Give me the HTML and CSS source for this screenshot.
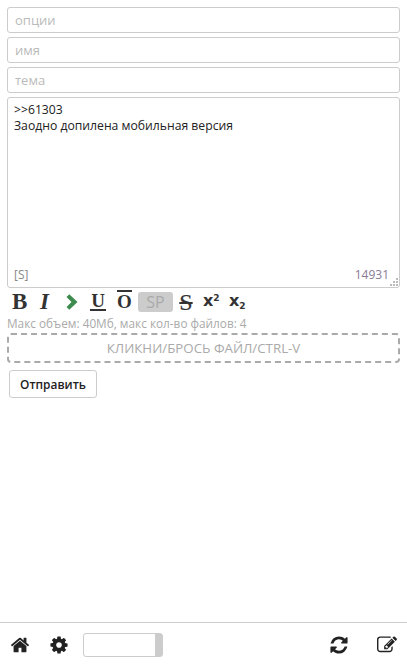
FILE: index.html
```html
<!DOCTYPE html>
<html lang="en">

<head>
    <meta charset="UTF-8">
    <meta name="viewport" content="width=device-width, initial-scale=1.0">
    <title>Ответ</title>
    <link rel="stylesheet" href="styles.css">
</head>

<body>
    <form class="post-form">
        <input class="field" type="text" placeholder="опции">
        <input class="field" type="text" placeholder="имя">
        <input class="field" type="text" placeholder="тема">

        <div class="message-box">
            <textarea class="message">&gt;&gt;61303
Заодно допилена мобильная версия</textarea>
            <span class="sage">[S]</span>
            <span class="counter">14931</span>
            <svg class="grip" viewBox="0 0 8 8">
                <rect x="6" y="0" width="2" height="2"></rect>
                <rect x="3" y="3" width="2" height="2"></rect>
                <rect x="6" y="3" width="2" height="2"></rect>
                <rect x="0" y="6" width="2" height="2"></rect>
                <rect x="3" y="6" width="2" height="2"></rect>
                <rect x="6" y="6" width="2" height="2"></rect>
            </svg>
        </div>

        <div class="markup">
            <b class="mk mk-b">B</b>
            <b class="mk mk-i">I</b>
            <svg class="mk-quote" viewBox="0 0 12 16"><path d="M0.500 3l2.800-2.800 8.200 7.800-8.200 7.800-2.800-2.800 5-5z"></path></svg>
            <b class="mk mk-u">U</b>
            <b class="mk mk-o">O</b>
            <span class="mk-sp">SP</span>
            <b class="mk mk-s">S</b>
            <b class="mk-x">x<span class="sup">2</span></b>
            <b class="mk-x">x<span class="sub">2</span></b>
        </div>

        <div class="limits">Макс объем: 40Мб, макс кол-во файлов: 4</div>
        <div class="dropzone">КЛИКНИ/БРОСЬ ФАЙЛ/CTRL-V</div>
        <button class="submit" type="button">Отправить</button>
    </form>

    <div class="footer">
        <svg class="icon" viewBox="0 0 1792 1792"><path d="M1472 992v480q0 26-19 45t-45 19h-384v-384h-256v384h-384q-26 0-45-19t-19-45v-480q0-1 .5-3t.5-3l575-474 575 474q1 2 1 6zm223-69l-62 74q-8 9-21 11h-3q-13 0-21-7l-692-577-692 577q-12 8-24 7-13-2-21-11l-62-74q-8-10-7-23.500t11-21.500l719-599q32-26 76-26t76 26l244 204v-195q0-14 9-23t23-9h192q14 0 23 9t9 23v408l219 182q10 8 11 21.500t-7 23.500z"></path></svg>
        <svg class="icon icon-cog" viewBox="0 0 1792 1792"><path d="M1152 896q0-106-75-181t-181-75-181 75-75 181 75 181 181 75 181-75 75-181zm512-109v222q0 12-8 23t-20 13l-185 28q-19 54-39 91 35 50 107 138 10 12 10 25t-9 23q-27 37-99 108t-94 71q-12 0-26-9l-138-108q-44 23-91 38-16 136-29 186-7 28-36 28h-222q-14 0-24.500-8.500t-11.500-21.500l-28-184q-49-16-90-37l-141 107q-10 9-25 9-14 0-25-11-126-114-165-168-7-10-7-23 0-12 8-23 15-21 51-66.500t54-70.500q-27-50-41-99l-183-27q-13-2-21-12.500t-8-23.500v-222q0-12 8-23t19-13l186-28q14-46 39-92-40-57-107-138-10-12-10-24 0-10 9-23 26-36 98.500-107.500t94.500-71.500q13 0 26 10l138 107q44-23 91-38 16-136 29-186 7-28 36-28h222q14 0 24.500 8.500t11.500 21.500l28 184q49 16 90 37l142-107q9-9 24-9 13 0 25 10 129 119 165 170 7 8 7 22 0 12-8 23-15 21-51 66.500t-54 70.500q26 50 41 98l183 28q13 2 21 12.500t8 23.500z"></path></svg>
        <div class="slider"><div class="slider-thumb"></div></div>
        <svg class="icon icon-refresh" viewBox="0 0 1792 1792"><path d="M1639 1056q0 5-1 7-64 268-268 434.500t-478 166.500q-146 0-282.500-55t-243.500-157l-129 129q-19 19-45 19t-45-19-19-45v-448q0-26 19-45t45-19h448q26 0 45 19t19 45-19 45l-137 137q71 66 161 102t187 36q134 0 250-65t186-179q11-17 53-117 8-23 30-23h192q13 0 22.500 9.500t9.500 22.500zm25-800v448q0 26-19 45t-45 19h-448q-26 0-45-19t-19-45 19-45l138-138q-148-137-349-137-134 0-250 65t-186 179q-11 17-53 117-8 23-30 23h-199q-13 0-22.500-9.500t-9.500-22.500v-7q65-268 270-434.500t480-166.500q146 0 284 55.500t245 156.500l130-129q19-19 45-19t45 19 19 45z"></path></svg>
        <svg class="icon" viewBox="0 0 1792 1792"><path d="M888 1184l116-116-152-152-116 116v56h96v96h56zm440-720q-16-16-33 1l-350 350q-17 17-1 33t33-1l350-350q17-17 1-33zm80 594v190q0 119-84.500 203.500t-203.500 84.500h-832q-119 0-203.500-84.500t-84.500-203.500v-832q0-119 84.500-203.500t203.500-84.500h832q63 0 117 25 15 7 18 23 3 17-9 29l-49 49q-14 14-32 8-23-6-45-6h-832q-66 0-113 47t-47 113v832q0 66 47 113t113 47h832q66 0 113-47t47-113v-126q0-13 9-22l64-64q15-15 35-7t20 29zm-96-738l288 288-672 672h-288v-288zm444 132l-92 92-288-288 92-92q28-28 68-28t68 28l152 152q28 28 28 68t-28 68z"></path></svg>
    </div>
</body>

</html>
```

FILE: styles.css
```css
body, html {
    margin: 0;
    padding: 0;
    height: 100%;
    overflow: hidden;
    background-color: #fff;
    font-family: "Open Sans", "Noto Sans", sans-serif;
    font-size: 12.2px;
    color: #222;
}

body {
    display: flex;
    flex-direction: column;
}

.post-form {
    flex: 1;
    display: flex;
    flex-direction: column;
    align-items: flex-start;
    padding: 7px 7px 0 7px;
}

.field {
    width: 100%;
    height: 26px;
    margin-bottom: 4px;
    padding: 0 7px;
    box-sizing: border-box;
    border: 1px solid #ccc;
    border-radius: 3px;
    font-family: inherit;
    font-size: 13px;
    color: #222;
}

.field::placeholder {
    color: #bbb;
    opacity: 1;
}

.message-box {
    position: relative;
    width: 100%;
    height: 191px;
}

.message {
    display: block;
    width: 100%;
    height: 100%;
    padding: 4px 6px;
    box-sizing: border-box;
    border: 1px solid #ccc;
    border-radius: 3px;
    font-family: inherit;
    font-size: 12.2px;
    line-height: 16px;
    color: #222;
    resize: none;
    overflow: hidden;
}

.sage {
    position: absolute;
    left: 7px;
    bottom: 5px;
    font-size: 12px;
    color: #888;
}

.counter {
    position: absolute;
    right: 11px;
    bottom: 5px;
    font-size: 12px;
    color: #8a7a94;
}

.grip {
    position: absolute;
    right: 2px;
    bottom: 2px;
    width: 8px;
    height: 8px;
    fill: #bbb;
}

.markup {
    display: flex;
    align-items: center;
    height: 28px;
    padding-left: 5px;
    color: #333;
}

.mk {
    font-family: "Liberation Serif", serif;
    font-size: 21px;
    line-height: 24px;
}

.mk-b {
    width: 26px;
    font-size: 23px;
}

.mk-i {
    width: 28px;
    padding-left: 2px;
    box-sizing: border-box;
    font-style: italic;
    font-size: 23px;
}

.mk-quote {
    width: 12px;
    height: 16px;
    margin-right: 12px;
    fill: #3d8b4f;
}

.mk-u {
    width: 16px;
    margin: 0 11px 2px 0;
    border-bottom: 2px solid #333;
    line-height: 17px;
    font-size: 19px;
    text-align: center;
}

.mk-o {
    width: 15px;
    margin: 0 6px 3px 0;
    border-top: 2px solid #333;
    line-height: 19px;
    font-size: 19px;
    text-align: center;
}

.mk-sp {
    width: 35px;
    height: 20px;
    margin-right: 5px;
    border-radius: 3px;
    background-color: #ccc;
    color: #aaa;
    font-size: 16px;
    line-height: 20px;
    text-align: center;
}

.mk-s {
    width: 16px;
    margin-right: 9px;
    font-weight: normal;
    -webkit-text-stroke: 0.2px #333;
    font-size: 24px;
    text-decoration: line-through;
    text-align: center;
}

.mk-x {
    width: 26px;
    font-family: "DejaVu Sans", sans-serif;
    font-size: 16px;
    line-height: 20px;
}

.sup, .sub {
    position: relative;
    font-size: 9px;
}

.sup { top: -5px; }
.sub { top: 3px; }

.limits {
    font-size: 11.800px;
    line-height: 15px;
    color: #aaa;
}

.dropzone {
    width: 100%;
    height: 30px;
    margin-top: 2px;
    box-sizing: border-box;
    border: 2px dashed #aaa;
    border-radius: 4px;
    font-size: 13.300px;
    line-height: 26px;
    text-align: center;
    color: #aaa;
}

.submit {
    width: 88px;
    height: 28px;
    margin: 7px 0 0 2px;
    padding: 0;
    border: 1px solid #ccc;
    border-radius: 3px;
    background-color: #fff;
    font-family: inherit;
    font-size: 11.900px;
    font-weight: 600;
    color: #222;
}

.footer {
    display: flex;
    align-items: center;
    height: 43px;
    padding: 0 10px;
    border-top: 1px solid #ccc;
}

.icon {
    width: 20px;
    height: 20px;
    fill: #222;
}

.icon-cog {
    margin: 0 14px 0 19px;
}

.icon-refresh {
    margin-left: auto;
    margin-right: 28px;
}

.slider {
    width: 80px;
    height: 24px;
    box-sizing: border-box;
    border: 1px solid #ccc;
    border-radius: 3px;
    display: flex;
    justify-content: flex-end;
}

.slider-thumb {
    width: 7px;
    background-color: #ccc;
}
```
